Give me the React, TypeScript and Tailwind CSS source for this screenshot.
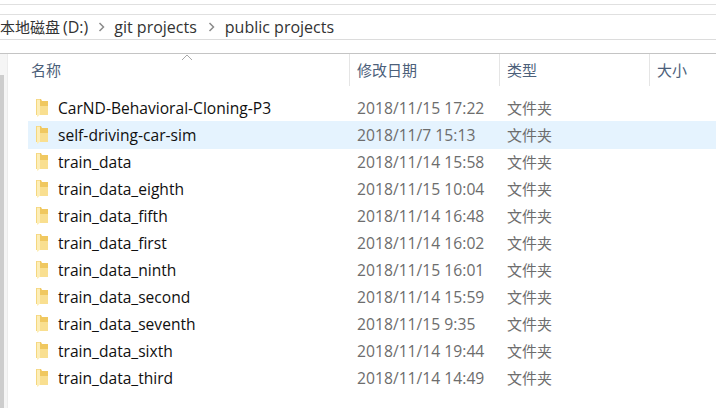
const rows = [
  { name: "CarND-Behavioral-Cloning-P3", date: "2018/11/15 17:22" },
  { name: "self-driving-car-sim", date: "2018/11/7 15:13", selected: true },
  { name: "train_data", date: "2018/11/14 15:58" },
  { name: "train_data_eighth", date: "2018/11/15 10:04" },
  { name: "train_data_fifth", date: "2018/11/14 16:48" },
  { name: "train_data_first", date: "2018/11/14 16:02" },
  { name: "train_data_ninth", date: "2018/11/15 16:01" },
  { name: "train_data_second", date: "2018/11/14 15:59" },
  { name: "train_data_seventh", date: "2018/11/15 9:35" },
  { name: "train_data_sixth", date: "2018/11/14 19:44" },
  { name: "train_data_third", date: "2018/11/14 14:49" },
];

function FolderIcon() {
  return (
    <svg width="14" height="18" viewBox="0 0 14 18" className="shrink-0">
      <path d="M1 0h5l1 2h6v14H1z" fill="#f0c860" />
      <path d="M5 7h8v9H5z" fill="#f9df90" />
      <path d="M2 .500h3v15L2.500 18 2 17z" fill="#fdeeb8" />
      <path d="M1 0h1v16H1z" fill="#f5d77e" />
    </svg>
  );
}

function Chevron({ className }: { className: string }) {
  return (
    <svg width="7" height="10" viewBox="0 0 7 10" className={`shrink-0 ${className}`}>
      <path d="M1.500 1l4 4-4 4" fill="none" stroke="#8a8a8a" strokeWidth="1.500" />
    </svg>
  );
}

export default function App() {
  return (
    <div className="h-[408px] w-[716px] overflow-hidden bg-white font-['Open_Sans','Noto_Sans_CJK_SC',sans-serif] text-[15px]">
      <div className="mt-1 h-[11px] border-y border-[#e0e0e0]" />
      <div className="flex h-[25px] items-center whitespace-nowrap border-b border-[#dcdcdc] text-[16px] text-[#333]">
        <span className="text-[15px]">本地磁盘</span>
        <span className="ml-[3px]">(D:)</span>
        <Chevron className="ml-[10px] mr-[9px]" />
        <span>git projects</span>
        <Chevron className="ml-[11px] mr-[10px]" />
        <span>public projects</span>
      </div>
      <div className="mt-[13px] flex h-[355px] border-t border-[#c4c4c4]">
        <div className="flex w-[8px] shrink-0 flex-col border-r border-[#ececec] bg-[#f5f5f5]">
          <div className="mt-[21px] w-[4px] flex-1 bg-[#cdcdcd]" />
        </div>
        <div className="relative min-w-0 flex-1">
          <svg width="12" height="7" viewBox="0 0 12 7" className="absolute left-[173px] top-0">
            <path d="M1 6l5-5 5 5" fill="none" stroke="#a8a8a8" />
          </svg>
          <div className="flex h-[32px] items-center text-[#4c607a]">
            <div className="w-[341px] shrink-0 pl-[23px]">名称</div>
            <div className="h-full w-[150px] shrink-0 border-l border-[#e5e5e5] pl-[7px] leading-[32px]">修改日期</div>
            <div className="h-full w-[150px] shrink-0 border-l border-[#e5e5e5] pl-[7px] leading-[32px]">类型</div>
            <div className="h-full flex-1 border-l border-[#e5e5e5] pl-[7px] leading-[32px]">大小</div>
          </div>
          <div className="mt-[8px] ml-[20px]">
            {rows.map((row) => (
              <div
                key={row.name}
                className={`-mb-px flex h-[28px] items-center pt-px ${row.selected ? "bg-[#e5f3fe]" : ""}`}
              >
                <div className="flex w-[322px] shrink-0 items-center gap-[9px] pl-[7px] text-[15.6px] text-[#101010]">
                  <FolderIcon />
                  <span>{row.name}</span>
                </div>
                <div className="w-[150px] shrink-0 pl-[7px] text-[15.7px] text-[#6d6d6d]">{row.date}</div>
                <div className="pl-[7px] text-[#6d6d6d]">文件夹</div>
              </div>
            ))}
          </div>
        </div>
      </div>
    </div>
  );
}
